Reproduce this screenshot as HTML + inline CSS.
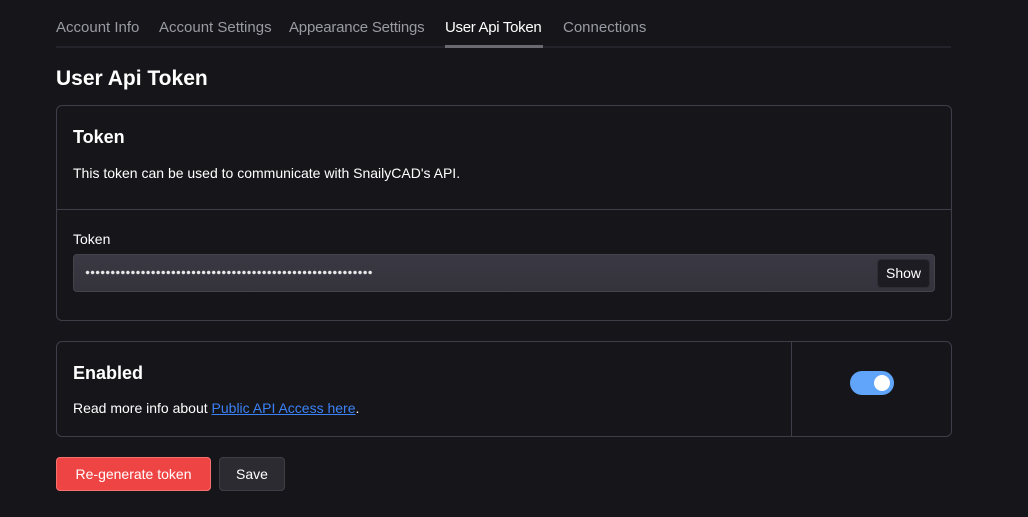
<!DOCTYPE html>
<html><head><style>
*{margin:0;padding:0;box-sizing:border-box}
body{width:1028px;height:517px;background:#16151a;font-family:"Liberation Sans",sans-serif;color:#fff;position:relative;overflow:hidden}
.a{position:absolute;white-space:nowrap}
.tab{top:19px;font-size:15px;color:#9a9aa3}
</style></head><body>
<div class="a tab" style="left:56px">Account Info</div>
<div class="a tab" style="left:159px">Account Settings</div>
<div class="a tab" style="left:289px;letter-spacing:-0.2px">Appearance Settings</div>
<div class="a tab" style="left:445px;color:#fff;letter-spacing:-0.3px">User Api Token</div>
<div class="a tab" style="left:563px">Connections</div>
<div class="a" style="left:56px;top:46px;width:895px;height:2px;background:#24232b"></div>
<div class="a" style="left:445px;top:45px;width:98px;height:3px;background:#6b6a73"></div>
<div class="a" style="left:56px;top:67px;font-size:21px;font-weight:bold">User Api Token</div>

<div class="a" style="left:56px;top:105px;width:896px;height:216px;border:1px solid #3d3e48;border-radius:6px"></div>
<div class="a" style="left:57px;top:209px;width:894px;height:1px;background:#3d3e48"></div>
<div class="a" style="left:73px;top:127px;font-size:18px;font-weight:bold">Token</div>
<div class="a" style="left:73px;top:165px;font-size:14px">This token can be used to communicate with SnailyCAD's API.</div>
<div class="a" style="left:73px;top:231px;font-size:14px">Token</div>
<div class="a" style="left:73px;top:254px;width:862px;height:38px;background:linear-gradient(#3a3943,#34333c);border:1px solid #44434c;border-radius:4px"></div>
<div class="a" style="left:85px;top:270px;width:288px;height:5px;background:radial-gradient(circle,#e8e8e8 1.5px,transparent 2px) 0 0/5.05px 5px repeat-x"></div>
<div class="a" style="left:877px;top:259px;width:53px;height:29px;background:#1d1c22;border:1px solid #2e2d35;border-radius:4px;font-size:14px;text-align:center;line-height:27px">Show</div>

<div class="a" style="left:56px;top:341px;width:896px;height:96px;border:1px solid #3d3e48;border-radius:6px"></div>
<div class="a" style="left:791px;top:342px;width:1px;height:94px;background:#3d3e48"></div>
<div class="a" style="left:73px;top:363px;font-size:18px;font-weight:bold">Enabled</div>
<div class="a" style="left:73px;top:400px;font-size:14px">Read more info about <span style="color:#3b82f6;text-decoration:underline">Public API Access here</span>.</div>
<div class="a" style="left:850px;top:371px;width:44px;height:24px;background:#60a5fa;border-radius:12px"></div>
<div class="a" style="left:874px;top:375px;width:16px;height:16px;background:#fff;border-radius:50%"></div>

<div class="a" style="left:56px;top:457px;width:155px;height:34px;background:#ef4444;border:1px solid #f87171;border-radius:4px;font-size:14px;text-align:center;line-height:32px">Re-generate token</div>
<div class="a" style="left:219px;top:457px;width:66px;height:34px;background:#2c2b32;border:1px solid #3f3e46;border-radius:4px;font-size:14px;text-align:center;line-height:32px">Save</div>
</body></html>
